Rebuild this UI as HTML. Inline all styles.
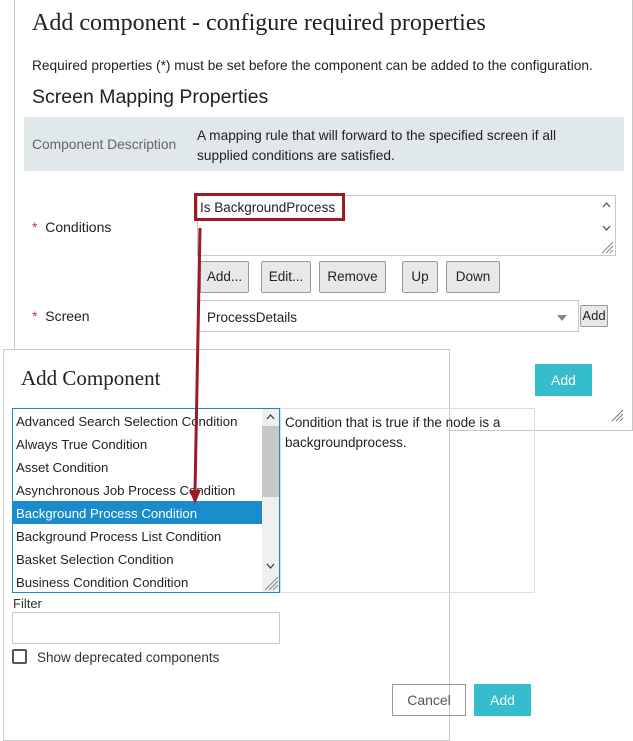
<!DOCTYPE html>
<html><head><meta charset="utf-8"><style>
*{box-sizing:border-box;margin:0;padding:0}
body{width:633px;height:740px;background:#fff;position:relative;overflow:hidden;font-family:"Liberation Sans",sans-serif;font-size:13px;color:#222}
.a{position:absolute;white-space:nowrap}
.btn{position:absolute;background:#e8e8ea;border:1px solid #999;border-radius:2px;height:32px;line-height:30px;text-align:center;font-size:13.5px;color:#222}
.serif{font-family:"Liberation Serif",serif}
</style></head><body>
<div class="a" style="left:14px;top:-2px;width:619px;height:433px;border:1px solid #c8c8c8;background:#fff"></div>
<div class="a serif" style="left:32px;top:10px;font-size:24px;color:#222">Add component - configure required properties</div>
<div class="a" style="left:32px;top:58px;font-size:13.7px">Required properties (*) must be set before the component can be added to the configuration.</div>
<div class="a" style="left:32px;top:86px;font-size:19.5px;color:#222">Screen Mapping Properties</div>
<div class="a" style="left:24px;top:117px;width:600px;height:54px;background:#e0e8ea"></div>
<div class="a" style="left:32px;top:137px;font-size:13.8px;color:#666">Component Description</div>
<div class="a" style="left:197px;top:126px;font-size:13.7px;line-height:20px;color:#222">A mapping rule that will forward to the specified screen if all<br>supplied conditions are satisfied.</div>
<div class="a" style="left:32px;top:219px;font-size:14px"><span style="color:#d33">*</span>&nbsp; Conditions</div>
<div class="a" style="left:197px;top:195px;width:419px;height:61px;border:1px solid #c8c8c8"></div>
<svg class="a" style="left:598px;top:196px" width="17" height="59"><path d="M5 11 L8.5 7 L12 11 M5 30 L8.5 34 L12 30" stroke="#555" fill="none" stroke-width="1.3"/><path d="M15 46 L4 57 M15 50 L8 57 M15 54 L12 57" stroke="#888" stroke-width="1"/></svg>
<div class="a" style="left:194px;top:193px;width:151px;height:28px;border:3px solid #9b1b22"></div>
<div class="a" style="left:200px;top:200px;font-size:13.5px">Is BackgroundProcess</div>
<div class="btn" style="left:200px;top:261px;width:49px">Add...</div>
<div class="btn" style="left:261px;top:261px;width:50px">Edit...</div>
<div class="btn" style="left:319px;top:261px;width:67px">Remove</div>
<div class="btn" style="left:402px;top:261px;width:36px">Up</div>
<div class="btn" style="left:446px;top:261px;width:54px">Down</div>
<div class="a" style="left:32px;top:308px;font-size:14px"><span style="color:#d33">*</span>&nbsp; Screen</div>
<div class="a" style="left:197px;top:300px;width:382px;height:32px;border:1px solid #c8c8c8"></div>
<div class="a" style="left:207px;top:310px;font-size:13.5px">ProcessDetails</div>
<div class="a" style="left:557px;top:315px;width:0;height:0;border-left:5px solid transparent;border-right:5px solid transparent;border-top:6px solid #888"></div>
<div class="btn" style="left:580px;top:305px;width:28px;height:22px;line-height:20px;font-size:13px">Add</div>
<div class="a" style="left:535px;top:364px;width:57px;height:32px;background:#35bccd;color:#fff;font-size:14px;line-height:32px;text-align:center">Add</div>
<svg class="a" style="left:610px;top:408px" width="14" height="14"><path d="M13 2 L2 13 M13 6 L6 13 M13 10 L10 13" stroke="#777" stroke-width="1"/></svg>
<div class="a" style="left:3px;top:349px;width:447px;height:392px;border:1px solid #c8c8c8;background:#fff"></div>
<div class="a serif" style="left:21px;top:366px;font-size:21px;color:#222">Add Component</div>
<div class="a" style="left:12px;top:408px;width:268px;height:185px;border:1px solid #1a8ad0;overflow:hidden">
 <div style="position:absolute;left:249px;top:0;width:17px;height:183px;background:#efefef"></div>
 <div style="position:absolute;left:249px;top:17px;width:17px;height:71px;background:#c8c8c8"></div>
 <svg style="position:absolute;left:249px;top:0" width="17" height="183"><path d="M5 10 L8.5 6 L12 10 M5 155 L8.5 159 L12 155" stroke="#444" fill="none" stroke-width="1.3"/><path d="M16 168 L3 181 M16 172 L7 181 M16 176 L11 181" stroke="#888" stroke-width="1"/></svg>
 <div style="position:absolute;left:0;top:92px;width:249px;height:23px;background:#1a8bcb"></div>
 <div style="position:absolute;left:3px;top:1px;font-size:13.2px;line-height:23px;white-space:nowrap">Advanced Search Selection Condition<br>Always True Condition<br>Asset Condition<br>Asynchronous Job Process Condition<br><span style="color:#fff">Background Process Condition</span><br>Background Process List Condition<br>Basket Selection Condition<br>Business Condition Condition</div>
</div>
<div class="a" style="left:280px;top:408px;width:255px;height:185px;border:1px solid #ddd"></div>
<div class="a" style="left:285px;top:413px;font-size:13.5px;line-height:20px">Condition that is true if the node is a<br>backgroundprocess.</div>
<div class="a" style="left:13px;top:596px;font-size:13px;color:#333">Filter</div>
<div class="a" style="left:12px;top:612px;width:268px;height:32px;border:1px solid #c8c8c8"></div>
<div class="a" style="left:12px;top:649px;width:15px;height:15px;border:2px solid #555;border-radius:2px"></div>
<div class="a" style="left:37px;top:650px;font-size:13.5px;color:#333">Show deprecated components</div>
<div class="a" style="left:392px;top:684px;width:74px;height:32px;border:1px solid #999;color:#555;font-size:14px;line-height:30px;text-align:center">Cancel</div>
<div class="a" style="left:474px;top:684px;width:57px;height:32px;background:#35bccd;color:#fff;font-size:14px;line-height:32px;text-align:center">Add</div>
<svg class="a" style="left:0;top:0" width="633" height="740"><line x1="200" y1="228" x2="195" y2="492" stroke="#9b1b22" stroke-width="3"/><polygon points="189,490 201,490 195,504" fill="#9b1b22"/></svg>
</body></html>
